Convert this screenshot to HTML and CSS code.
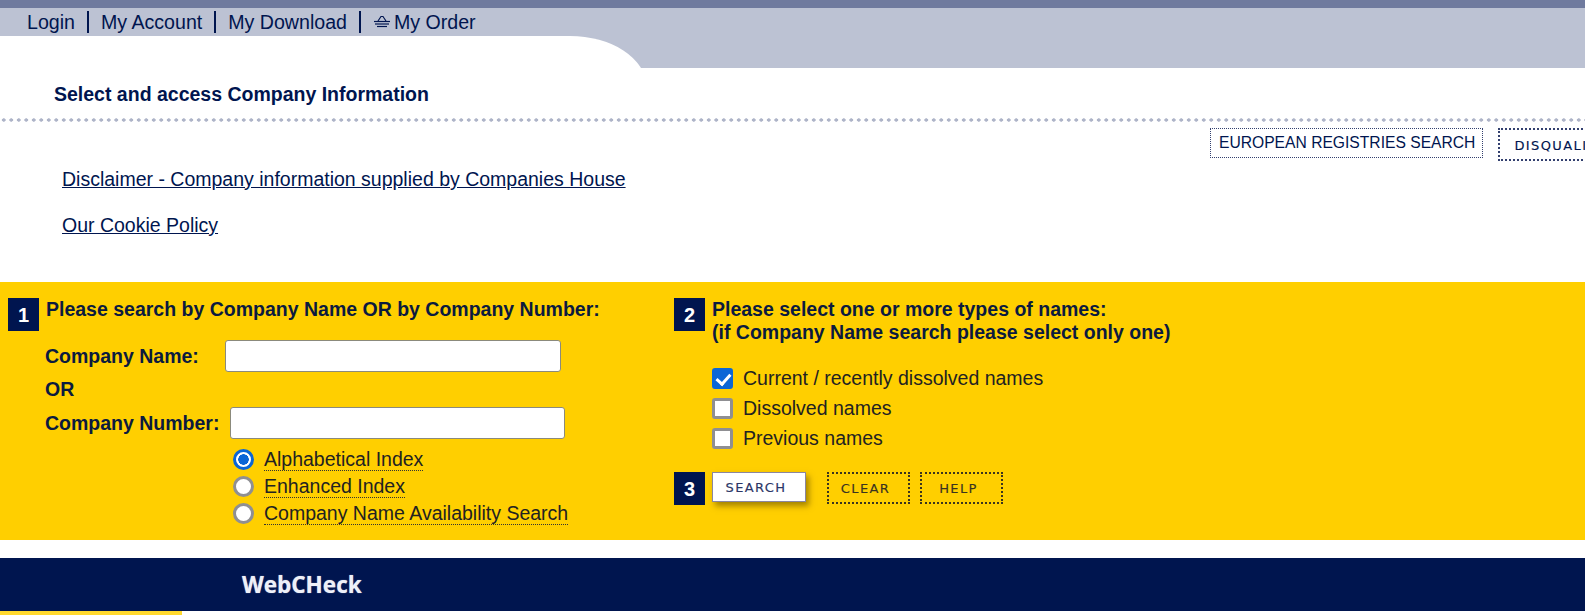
FILE: index.html

```html
<!DOCTYPE html>
<html lang="en">
<head>
    <meta charset="UTF-8">
    <meta name="viewport" content="width=device-width, initial-scale=1.0">
    <title>WebCHeck - Company Search</title>
    <link rel="stylesheet" href="styles.css">
</head>
<body>
    <div class="top-line"></div>
    <header class="masthead">
        <nav class="account-nav">
            <a href="#">Login</a>
            <span class="sep"></span>
            <a href="#">My Account</a>
            <span class="sep"></span>
            <a href="#">My Download</a>
            <span class="sep"></span>
            <a href="#" class="order-link">
                <svg class="basket" width="18" height="14" viewBox="0 0 18 14" fill="none" stroke="#001550" stroke-width="1.2">
                    <path d="M5 6 L8 1.5 H10 L13 6"/>
                    <path d="M1 6.5 H17"/>
                    <path d="M2 9 H16"/>
                    <path d="M4 11.5 H14"/>
                </svg>My Order
            </a>
        </nav>
        <div class="masthead-curve"></div>
    </header>

    <h1 class="page-title">Select and access Company Information</h1>
    <div class="dotted-rule"></div>

    <div class="tab-row">
        <a href="#" class="tab-plain">EUROPEAN REGISTRIES SEARCH</a>
        <a href="#" class="tab-heavy">DISQUALIFIED DIRECTORS SEARCH</a>
    </div>

    <div class="notices">
        <p><a href="#">Disclaimer - Company information supplied by Companies House</a></p>
        <p><a href="#">Our Cookie Policy</a></p>
    </div>

    <form class="search-band" onsubmit="return false">
        <section class="col-name">
            <div class="step-head">
                <span class="step-no">1</span>
                <h2>Please search by Company Name OR by Company Number:</h2>
            </div>
            <div class="field-row name-row">
                <label for="company-name">Company Name:</label>
                <input type="text" id="company-name">
            </div>
            <div class="or-row">OR</div>
            <div class="field-row number-row">
                <label for="company-number">Company Number:</label>
                <input type="text" id="company-number">
            </div>
            <div class="index-options">
                <label><input type="radio" name="index" checked><span>Alphabetical Index</span></label>
                <label><input type="radio" name="index"><span>Enhanced Index</span></label>
                <label><input type="radio" name="index"><span>Company Name Availability Search</span></label>
            </div>
        </section>

        <section class="col-types">
            <div class="step-head">
                <span class="step-no">2</span>
                <h2>Please select one or more types of names:<br>(if Company Name search please select only one)</h2>
            </div>
            <div class="type-options">
                <label><input type="checkbox" checked>Current / recently dissolved names</label>
                <label><input type="checkbox">Dissolved names</label>
                <label><input type="checkbox">Previous names</label>
            </div>
            <div class="actions">
                <span class="step-no">3</span>
                <button class="btn-search">SEARCH</button>
                <button class="btn-dotted btn-clear" type="reset">CLEAR</button>
                <button class="btn-dotted btn-help">HELP</button>
            </div>
        </section>
    </form>

    <footer class="brand-bar">
        <span class="brand-name">WebCHeck</span>
    </footer>
    <div class="yellow-stub"></div>
</body>
</html>
```

FILE: styles.css

```css
:root {
    --navy: #00154f;
    --yellow: #ffcf00;
    --band: #bcc2d3;
    --check-blue: #0b66d6;
    --check-grey: #8f8f92;
}

* {
    box-sizing: border-box;
}

html, body {
    height: 615px;
    overflow: hidden;
}

body {
    margin: 0;
    background-color: white;
    color: var(--navy);
    font-family: "Liberation Sans", Arial, sans-serif;
}

a {
    color: var(--navy);
}

.top-line {
    height: 8px;
    background-color: #6f7a9e;
}

.masthead {
    height: 60px;
    overflow: hidden;
    background-color: var(--band);
}

.account-nav {
    display: flex;
    align-items: center;
    height: 28px;
    padding-left: 27px;
    font-size: 19.6px;
}

.account-nav a {
    text-decoration: none;
}

.sep {
    width: 2px;
    height: 22px;
    margin: 0 12px;
    background-color: var(--navy);
}

.order-link {
    display: flex;
    align-items: center;
}

.basket {
    margin-right: 3px;
}

.masthead-curve {
    width: 646px;
    height: 50px;
    background-color: white;
    border-top-right-radius: 76px 50px;
}

.page-title {
    margin: 14px 0 0 54px;
    font-size: 19.5px;
    line-height: 24px;
}

.dotted-rule {
    height: 4px;
    margin-top: 12px;
    background-image: radial-gradient(circle, #aeb4c8 1.5px, transparent 1.8px);
    background-size: 7.5px 4px;
}

.tab-row {
    display: flex;
    gap: 15px;
    margin: 6px 0 0 1210px;
    width: 800px;
}

.tab-row a {
    color: var(--navy);
    text-decoration: none;
    white-space: nowrap;
}

.tab-plain {
    height: 30px;
    padding: 0 7px 0 8px;
    border: 1px dotted #33406f;
    font-size: 15.65px;
    line-height: 27px;
}

.tab-heavy {
    height: 33px;
    padding: 0 14px;
    border: 2px dotted #33406f;
    font-family: "DejaVu Sans", sans-serif;
    font-size: 13px;
    letter-spacing: 1.4px;
    line-height: 31px;
    -webkit-text-stroke: 0.15px;
}

.notices {
    margin: 7px 0 0 62px;
    height: 114px;
    font-size: 19.5px;
}

.notices p {
    margin: 0 0 23px;
    line-height: 23px;
}

.search-band {
    display: flex;
    height: 258px;
    background-color: var(--yellow);
    color: #0b1a3f;
}

.col-name {
    width: 674px;
    padding: 16px 0 0 8px;
}

.col-types {
    padding-top: 16px;
}

.step-head {
    display: flex;
    gap: 7px;
}

.step-head h2 {
    margin: 0;
    font-size: 19.5px;
    line-height: 23px;
}

.step-no {
    flex: none;
    width: 31px;
    height: 33px;
    background-color: var(--navy);
    color: white;
    font-size: 20px;
    font-weight: bold;
    line-height: 34px;
    text-align: center;
}

.field-row {
    display: flex;
    align-items: center;
    margin-left: 37px;
    font-size: 19.5px;
    font-weight: bold;
}

.field-row label {
    padding-top: 1px;
}

.field-row input {
    height: 32px;
    border: 1px solid #8b8a7c;
    border-radius: 3px;
    background-color: white;
}

.name-row {
    margin-top: 9px;
    gap: 26px;
}

.name-row input {
    width: 336px;
}

.or-row {
    margin: 6px 0 6px 37px;
    font-size: 19.5px;
    font-weight: bold;
    line-height: 23px;
}

.number-row {
    gap: 11px;
}

.number-row input {
    width: 335px;
}

.index-options {
    margin: 7px 0 0 225px;
    font-size: 19.5px;
}

.index-options label {
    display: flex;
    align-items: center;
    height: 27px;
}

.index-options input {
    appearance: none;
    width: 21px;
    height: 21px;
    margin: 0 10px 0 0;
    border: 3px solid var(--check-grey);
    border-radius: 50%;
    background-color: white;
}

.index-options input:checked {
    border-color: var(--check-blue);
    background: radial-gradient(circle, var(--check-blue) 5px, white 5.5px);
}

.index-options span {
    border-bottom: 1px dotted #333;
    line-height: 22px;
    color: #222;
}

.type-options {
    margin: 19px 0 0 38px;
    font-size: 19.5px;
    color: #222;
}

.type-options label {
    display: flex;
    align-items: center;
    height: 30px;
}

.type-options input {
    appearance: none;
    position: relative;
    width: 21px;
    height: 21px;
    margin: 0 10px 0 0;
    border: 3px solid var(--check-grey);
    border-radius: 3px;
    background-color: white;
}

.type-options input:checked {
    border-color: var(--check-blue);
    background-color: var(--check-blue);
}

/* white tick on the checked box */
.type-options input:checked::after {
    content: "";
    position: absolute;
    left: 4px;
    top: 0;
    width: 6px;
    height: 11px;
    border: solid white;
    border-width: 0 3px 3px 0;
    transform: rotate(42deg);
}

.actions {
    display: flex;
    align-items: flex-start;
    margin-top: 19px;
}

.actions button {
    font-family: "DejaVu Sans", sans-serif;
    font-size: 13px;
    letter-spacing: 1.4px;
    padding: 0 6px 0 0;
    cursor: pointer;
    -webkit-text-stroke: 0.15px;
}

.btn-search {
    width: 94px;
    height: 30px;
    margin-left: 7px;
    border: 1px solid #8a86a0;
    background-color: white;
    color: #2b3566;
    box-shadow: 3px 4px 6px rgba(90, 70, 0, 0.55);
}

.btn-dotted {
    width: 83px;
    height: 32px;
    border: 2px dotted #3a3320;
    background-color: transparent;
    color: #3a3320;
}

.btn-clear {
    margin-left: 21px;
}

.btn-help {
    margin-left: 10px;
}

.brand-bar {
    height: 53px;
    margin-top: 18px;
    padding-left: 242px;
    background-color: var(--navy);
}

.brand-name {
    color: #eef0f8;
    font-family: "Open Sans", sans-serif;
    font-size: 22.5px;
    font-weight: 700;
    line-height: 53px;
    text-shadow: 0 0 1px rgba(238, 240, 248, 0.7);
}

.yellow-stub {
    width: 182px;
    height: 4px;
    background-color: #ffd92e;
}
```
